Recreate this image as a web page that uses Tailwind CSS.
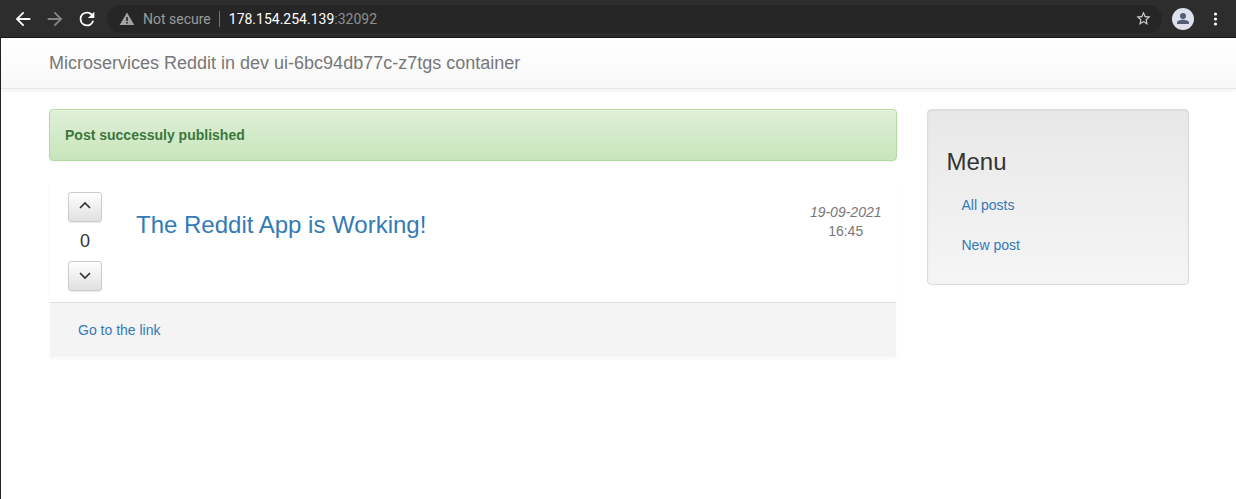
<!DOCTYPE html>
<html lang="en">
<head>
<meta charset="utf-8">
<meta name="viewport" content="width=device-width, initial-scale=1">
<title>Microservices Reddit</title>
<script src="https://cdn.jsdelivr.net/npm/@tailwindcss/browser@4"></script>
</head>
<body class="flex min-h-screen flex-col bg-white font-['Liberation_Sans',Arial,sans-serif] text-sm leading-5 text-[#333]">
  <!-- Browser toolbar -->
  <div class="flex h-[38px] items-center border-b border-[#151515] bg-[#2d2d2d] pr-2 pl-[11px] font-[Roboto,sans-serif]">
    <button type="button" aria-label="Back" class="mr-2 flex size-6 items-center justify-center text-white">
      <svg class="size-[22px]" viewBox="0 0 24 24" fill="currentColor"><path d="M20 11H7.83l5.59-5.59L12 4l-8 8 8 8 1.41-1.41L7.83 13H20v-2z"/></svg>
    </button>
    <button type="button" aria-label="Forward" class="mr-2 flex size-6 items-center justify-center text-[#868686]">
      <svg class="size-[22px]" viewBox="0 0 24 24" fill="currentColor"><path d="M12 4l-1.41 1.41L16.17 11H4v2h12.17l-5.58 5.59L12 20l8-8-8-8z"/></svg>
    </button>
    <button type="button" aria-label="Reload" class="mr-2 flex size-6 items-center justify-center text-white">
      <svg class="size-[22px]" viewBox="0 0 24 24" fill="currentColor"><path d="M17.65 6.35A7.96 7.96 0 0 0 12 4a8 8 0 1 0 7.73 10h-2.08A6 6 0 1 1 12 6c1.66 0 3.14.69 4.22 1.78L13 11h7V4l-2.35 2.35z"/></svg>
    </button>
    <div class="flex h-7 min-w-0 flex-1 items-center rounded-full bg-[#262626] pr-2.5 pl-3">
      <svg class="mr-2 size-4 shrink-0 text-[#a3a3a3]" viewBox="0 0 16 16"><path d="M8 1.5L15.3 14H.7z" fill="currentColor"/><path d="M7.2 6h1.6v4H7.2zM7.2 11h1.6v1.6H7.2z" fill="#262626"/></svg>
      <span class="text-[#9b9b9b]">Not secure</span>
      <span class="mr-[9px] ml-2 h-4 w-px bg-[#777]"></span>
      <span class="flex-1 text-[#8e8e8e]"><span class="text-white">178.154.254.139</span>:32092</span>
      <button type="button" aria-label="Bookmark this page" class="text-[#d0d0d0]">
        <svg class="size-[17px]" viewBox="0 0 24 24" fill="currentColor"><path d="M22 9.24l-7.19-.62L12 2 9.19 8.63 2 9.24l5.46 4.73L5.82 21 12 17.27 18.18 21l-1.63-7.03L22 9.24zM12 15.4l-3.76 2.27 1-4.28-3.32-2.88 4.38-.38L12 6.1l1.71 4.04 4.38.38-3.32 2.88 1 4.28L12 15.4z"/></svg>
      </button>
    </div>
    <button type="button" aria-label="Profile" class="ml-2.5 size-[22px]">
      <svg class="size-full" viewBox="0 0 22 22"><circle cx="11" cy="11" r="11" fill="#dee1ec"/><circle cx="11" cy="8" r="3" fill="#525e75"/><path d="M5 16v-1.3c0-2 3.5-2.9 6-2.9s6 .9 6 2.9V16z" fill="#525e75"/></svg>
    </button>
    <button type="button" aria-label="Browser menu" class="ml-2.5 flex size-6 items-center justify-center text-white">
      <svg class="size-5" viewBox="0 0 20 20" fill="currentColor"><circle cx="9.5" cy="5" r="1.6"/><circle cx="9.5" cy="10" r="1.6"/><circle cx="9.5" cy="15" r="1.6"/></svg>
    </button>
  </div>

  <div class="flex-1 border-l border-[#222]">
    <header class="mb-5 border-b border-[#e7e7e7] bg-linear-to-b from-white to-[#f8f8f8] pr-4 pl-[17px] shadow-[0_1px_5px_rgba(0,0,0,0.075)]">
      <div class="mx-auto flex h-[50px] max-w-[1140px] items-center">
        <a href="#" class="text-lg leading-5 text-[#777]">Microservices Reddit in dev ui-6bc94db77c-z7tgs container</a>
      </div>
    </header>

    <div class="pr-4 pl-[17px]">
      <div class="mx-auto grid max-w-[1140px] grid-cols-12 items-start gap-x-[30px]">
        <main class="col-span-9">
          <div role="status" class="mb-5 rounded border border-[#b2dba1] bg-linear-to-b from-[#dff0d8] to-[#c8e5bc] p-[15px] font-bold text-[#3c763d] shadow-[inset_0_1px_0_rgba(255,255,255,0.25),0_1px_2px_rgba(0,0,0,0.05)]">Post successuly published</div>

          <article class="rounded border border-transparent shadow-[0_1px_2px_rgba(0,0,0,0.05)]">
            <div class="flex items-start pt-2.5 pb-2.5">
              <div class="flex w-[70px] flex-col items-center text-center">
                <button type="button" aria-label="Vote up" class="flex h-[30px] w-[34px] items-center justify-center rounded-[3px] border border-[#ccc] bg-linear-to-b from-white to-[#e0e0e0] pb-1 shadow-[inset_0_1px_0_rgba(255,255,255,0.15),0_1px_1px_rgba(0,0,0,0.075)]">
                  <svg class="size-3" viewBox="0 0 12 12" fill="none" stroke="#333" stroke-width="1.7"><path d="M1 9l5-5 5 5"/></svg>
                </button>
                <span class="mt-[9px] mb-2.5 text-lg leading-5">0</span>
                <button type="button" aria-label="Vote down" class="mb-px flex h-[30px] w-[34px] items-center justify-center rounded-[3px] border border-[#ccc] bg-linear-to-b from-white to-[#e0e0e0] pb-0.5 shadow-[inset_0_1px_0_rgba(255,255,255,0.15),0_1px_1px_rgba(0,0,0,0.075)]">
                  <svg class="size-3" viewBox="0 0 12 12" fill="none" stroke="#333" stroke-width="1.7"><path d="M1 4l5 5 5-5"/></svg>
                </button>
              </div>
              <h3 class="mt-5 ml-4 flex-1 text-2xl leading-[26px]"><a href="#" class="text-[#337ab7]">The Reddit App is Working!</a></h3>
              <time datetime="2021-09-19T16:45" class="mt-[11px] mr-[14px] text-center text-sm leading-[19px] text-[#777]"><em>19-09-2021</em><br>16:45</time>
            </div>
            <div class="border-t border-[#ddd] bg-[#f4f4f4] px-7 pt-[17px] pb-[17px]">
              <a href="#" class="text-[#337ab7]">Go to the link</a>
            </div>
          </article>
        </main>

        <aside class="col-span-3 rounded border border-[#dcdcdc] bg-linear-to-b from-[#e8e8e8] to-[#f5f5f5] px-[19px] pt-[39px] pb-[19px] shadow-[inset_0_1px_3px_rgba(0,0,0,0.05),0_1px_0_rgba(255,255,255,0.1)]">
          <h3 class="mb-2.5 text-2xl leading-[26px]">Menu</h3>
          <nav class="flex flex-col">
            <a href="#" class="px-[15px] py-2.5 text-[#337ab7]">All posts</a>
            <a href="#" class="px-[15px] py-2.5 text-[#337ab7]">New post</a>
          </nav>
        </aside>
      </div>
    </div>
  </div>
</body>
</html>
